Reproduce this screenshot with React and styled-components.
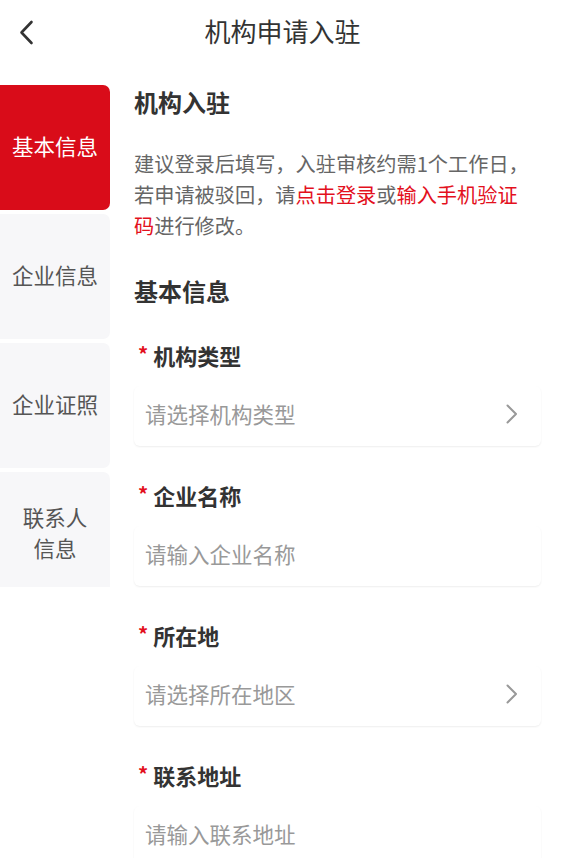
import React from "react";
import styled, { createGlobalStyle } from "styled-components";

const GlobalStyle = createGlobalStyle`
  body {
    margin: 0;
    background: #fff;
    font-family: "Noto Sans CJK SC", "Noto Sans", sans-serif;
  }
`;

const Page = styled.div`
  width: 565px;
  height: 858px;
  overflow: hidden;
  background: #fff;
`;

const Header = styled.div`
  height: 64px;
  display: flex;
  align-items: center;
  justify-content: center;
  position: relative;
`;

const BackButton = styled.div`
  position: absolute;
  left: 19px;
  top: 18px;
  width: 22px;
  height: 30px;
  display: flex;
  align-items: center;
`;

const Title = styled.h1`
  margin: 0 0 3px;
  font-size: 26px;
  font-weight: 400;
  color: #333;
  line-height: 34px;
`;

const Body = styled.div`
  display: flex;
  margin-top: 21px;
`;

const Sidebar = styled.div`
  width: 110px;
  flex-shrink: 0;
  height: 502px;
  overflow: hidden;
  display: flex;
  flex-direction: column;
  gap: 4px;
`;

const Tab = styled.div`
  height: 125px;
  flex-shrink: 0;
  box-sizing: border-box;
  padding-bottom: 5px;
  display: flex;
  align-items: center;
  justify-content: center;
  text-align: center;
  white-space: pre-line;
  font-size: 21.5px;
  line-height: 31px;
  border-radius: 0 7px 7px 0;
  background: ${(props) => (props.active ? "#d90c19" : "#f7f7f9")};
  color: ${(props) => (props.active ? "#fff" : "#555")};
`;

const Content = styled.div`
  flex: 1;
  padding: 0 24px;
`;

const Heading = styled.h2`
  margin: ${(props) => props.top || 0}px 0 0;
  font-size: 24px;
  font-weight: 700;
  color: #333;
  line-height: 34px;
`;

const Desc = styled.p`
  margin: 29px 0 0;
  padding-right: 8px;
  font-size: 20.2px;
  line-height: 31px;
  color: #666;
`;

const Link = styled.span`
  color: #e3101d;
`;

const Field = styled.div`
  margin-top: ${(props) => props.top}px;
`;

const Label = styled.div`
  display: flex;
  align-items: center;
  height: 30px;
  font-size: 22px;
  font-weight: 700;
  color: #333;
`;

const Star = styled.span`
  color: #e3101d;
  font-size: 20px;
  margin: 0 5px 0 4px;
  position: relative;
  top: -2px;
`;

const InputBox = styled.div`
  margin-top: 16px;
  height: 60px;
  box-sizing: border-box;
  padding: 0 22px 5px 11px;
  display: flex;
  align-items: center;
  justify-content: space-between;
  background: #fff;
  border-radius: 6px;
  box-shadow: 0 1px 2px rgba(0, 0, 0, 0.07);
`;

const Placeholder = styled.span`
  font-size: 21.5px;
  color: #999;
`;

const BackIcon = () => (
  <svg width="16" height="26" viewBox="0 0 16 26">
    <path
      d="M12.5 2 L2.5 12.5 L12.5 23"
      fill="none"
      stroke="#333"
      strokeWidth="2.6"
      strokeLinecap="round"
      strokeLinejoin="round"
    />
  </svg>
);

const ArrowIcon = () => (
  <svg width="14" height="22" viewBox="0 0 14 22">
    <path
      d="M2.5 2.5 L11 11 L2.5 19.5"
      fill="none"
      stroke="#999"
      strokeWidth="2"
      strokeLinecap="round"
      strokeLinejoin="round"
    />
  </svg>
);

const tabs = ["基本信息", "企业信息", "企业证照", "联系人\n信息"];

const fields = [
  { label: "机构类型", placeholder: "请选择机构类型", select: true },
  { label: "企业名称", placeholder: "请输入企业名称" },
  { label: "所在地", placeholder: "请选择所在地区", select: true },
  { label: "联系地址", placeholder: "请输入联系地址" },
];

const App = () => {
  return (
    <Page>
      <GlobalStyle />
      <Header>
        <BackButton>
          <BackIcon />
        </BackButton>
        <Title>机构申请入驻</Title>
      </Header>
      <Body>
        <Sidebar>
          {tabs.map((t, i) => (
            <Tab key={t} active={i === 0}>
              {t}
            </Tab>
          ))}
        </Sidebar>
        <Content>
          <Heading>机构入驻</Heading>
          <Desc>
            建议登录后填写，入驻审核约需1个工作日，若申请被驳回，请
            <Link>点击登录</Link>或<Link>输入手机验证码</Link>进行修改。
          </Desc>
          <Heading top={33}>基本信息</Heading>
          {fields.map((f, i) => (
            <Field key={f.label} top={i === 0 ? 32 : 34}>
              <Label>
                <Star>*</Star>
                {f.label}
              </Label>
              <InputBox>
                <Placeholder>{f.placeholder}</Placeholder>
                {f.select && <ArrowIcon />}
              </InputBox>
            </Field>
          ))}
        </Content>
      </Body>
    </Page>
  );
};

export default App;
